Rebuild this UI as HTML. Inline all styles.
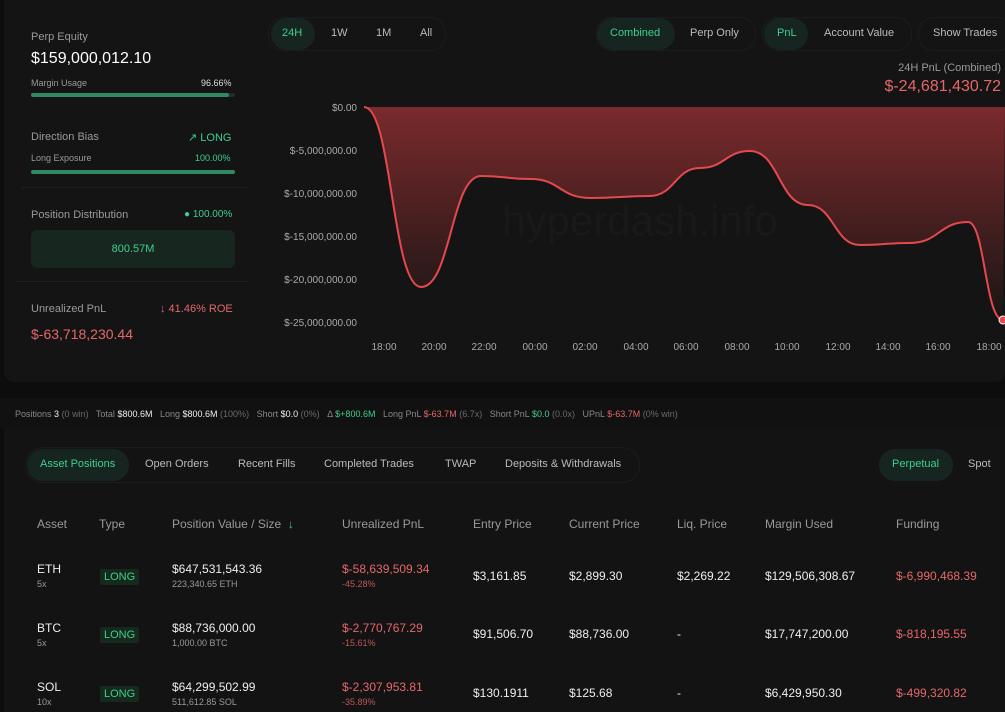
<!DOCTYPE html>
<html><head><meta charset="utf-8"><style>
*{box-sizing:border-box;margin:0;padding:0}
body{width:1005px;height:712px;overflow:hidden;background:#0d0d0d;font-family:"Liberation Sans",sans-serif;color:#e8e8e8;position:relative}
.abs{position:absolute;white-space:nowrap}
.g{color:#3ecf8e}.r{color:#e5676b}.m{color:#9a9a9a}.d{color:#6a6a6a}
.top{position:absolute;left:4px;top:0;width:1001px;height:382px;background:#141414;border-radius:0 0 10px 10px}
.bar{position:absolute;height:4px;border-radius:2px;background:#2a2a2a}
.bar i{display:block;height:4px;border-radius:2px;background:#2f8a63}
.pill{position:absolute;height:32px;border-radius:16px;background:#172520}
.grp{position:absolute;height:34px;border:1px solid #1c1c1c;border-radius:16px}
.bot{position:absolute;left:4px;top:428px;width:1001px;height:284px;background:#131313}
.tag{position:absolute;background:#15291d;color:#3ecf8e;font-size:11px;padding:2px 4px;border-radius:2px}
</style></head><body>
<div class="top"></div>
<div class="abs m" style="left:31px;top:31px;font-size:11px">Perp Equity</div>
<div class="abs" style="left:31px;top:50px;font-size:16px;color:#fff">$159,000,012.10</div>
<div class="abs m" style="left:31px;top:78px;font-size:9px">Margin Usage</div>
<div class="abs" style="left:201px;top:78px;font-size:9px;color:#ddd">96.66%</div>
<div class="bar" style="left:31px;top:93px;width:204px"><i style="width:198px"></i></div>
<div class="abs m" style="left:31px;top:131px;font-size:11px">Direction Bias</div>
<div class="abs g" style="left:188px;top:131px;font-size:11px">↗ LONG</div>
<div class="abs m" style="left:31px;top:153px;font-size:9px">Long Exposure</div>
<div class="abs g" style="left:195px;top:153px;font-size:9px">100.00%</div>
<div class="bar" style="left:31px;top:170px;width:204px;background:#2f8a63"></div>
<div class="abs" style="left:22px;top:187px;width:225px;height:1px;background:#1f1f1f"></div>
<div class="abs m" style="left:31px;top:209px;font-size:11px">Position Distribution</div>
<div class="abs g" style="left:184px;top:209px;font-size:10px">● 100.00%</div>
<div class="abs" style="left:31px;top:230px;width:204px;height:38px;background:#182620;border-radius:6px;color:#3ecf8e;font-size:11px;text-align:center;line-height:38px">800.57M</div>
<div class="abs" style="left:15px;top:281px;width:232px;height:1px;background:#1f1f1f"></div>
<div class="abs m" style="left:31px;top:303px;font-size:11px">Unrealized PnL</div>
<div class="abs r" style="left:160px;top:303px;font-size:11px">↓ 41.46% ROE</div>
<div class="abs r" style="left:31px;top:326px;font-size:14px">$-63,718,230.44</div>
<div class="grp" style="left:268px;top:17px;width:178px"></div>
<div class="pill" style="left:271px;top:18px;width:44px"></div>
<div class="abs g" style="left:282px;top:27px;font-size:11px">24H</div>
<div class="abs" style="left:331px;top:27px;font-size:11px;color:#bbb">1W</div>
<div class="abs" style="left:376px;top:27px;font-size:11px;color:#bbb">1M</div>
<div class="abs" style="left:420px;top:27px;font-size:11px;color:#bbb">All</div>
<div class="grp" style="left:596px;top:17px;width:160px"></div>
<div class="pill" style="left:597px;top:18px;width:78px"></div>
<div class="abs g" style="left:610px;top:27px;font-size:11px">Combined</div>
<div class="abs" style="left:690px;top:27px;font-size:11px;color:#bbb">Perp Only</div>
<div class="grp" style="left:762px;top:17px;width:150px"></div>
<div class="pill" style="left:764px;top:18px;width:44px"></div>
<div class="abs g" style="left:777px;top:27px;font-size:11px">PnL</div>
<div class="abs" style="left:824px;top:27px;font-size:11px;color:#bbb">Account Value</div>
<div class="grp" style="left:918px;top:17px;width:95px"></div>
<div class="abs" style="left:933px;top:27px;font-size:11px;color:#bbb">Show Trades</div>
<div class="abs m" style="right:4px;top:62px;font-size:11px">24H PnL (Combined)</div>
<div class="abs r" style="right:4px;top:78px;font-size:16px">$-24,681,430.72</div>
<svg class="abs" style="left:0;top:0" width="1005" height="382">
<defs><linearGradient id="f" x1="0" y1="107" x2="0" y2="320" gradientUnits="userSpaceOnUse"><stop offset="0" stop-color="#7a2a2c"/><stop offset="1" stop-color="#7a2a2c" stop-opacity="0.05"/></linearGradient></defs>
<text x="640" y="235" font-size="42" fill="#191919" text-anchor="middle" font-family="Liberation Sans">hyperdash.info</text>
<path d="M364,107 C392,107 392,287 421,287 C451,287 451,176 481,176 C506,176 506,179 531,179 C560,179 560,198 590,198 C620,198 620,196 649,196 C675,196 675,168 700,168 C725,168 725,151 750,151 C779,151 779,205 808,205 C834,205 834,245 860,245 C885,245 885,243 910,243 C939,243 939,222 968,222 C985,222 985,320 1003,320 L1005,107 Z" fill="url(#f)"/>
<path d="M364,107 C392,107 392,287 421,287 C451,287 451,176 481,176 C506,176 506,179 531,179 C560,179 560,198 590,198 C620,198 620,196 649,196 C675,196 675,168 700,168 C725,168 725,151 750,151 C779,151 779,205 808,205 C834,205 834,245 860,245 C885,245 885,243 910,243 C939,243 939,222 968,222 C985,222 985,320 1003,320" fill="none" stroke="#e5484d" stroke-width="2"/>
<circle cx="1003" cy="320" r="4" fill="#e5484d" stroke="#fff" stroke-width="1"/>
<g font-size="10" fill="#aaa" text-anchor="end" font-family="Liberation Sans">
<text x="357" y="111">$0.00</text><text x="357" y="154">$-5,000,000.00</text><text x="357" y="197">$-10,000,000.00</text><text x="357" y="240">$-15,000,000.00</text><text x="357" y="283">$-20,000,000.00</text><text x="357" y="326">$-25,000,000.00</text></g>
<g font-size="10" fill="#aaa" text-anchor="middle" font-family="Liberation Sans">
<text x="384" y="350">18:00</text><text x="434" y="350">20:00</text><text x="484" y="350">22:00</text><text x="535" y="350">00:00</text><text x="585" y="350">02:00</text><text x="636" y="350">04:00</text><text x="686" y="350">06:00</text><text x="737" y="350">08:00</text><text x="787" y="350">10:00</text><text x="838" y="350">12:00</text><text x="888" y="350">14:00</text><text x="938" y="350">16:00</text><text x="989" y="350">18:00</text></g>
</svg>
<div class="abs" style="left:0;top:398px;width:1005px;height:30px;background:#111"></div>
<div class="abs" style="left:15px;top:409px;font-size:9px;color:#888">Positions <b style="color:#eee;font-weight:normal">3</b> <span class="d">(0 win)</span>&nbsp;&nbsp; Total <span style="color:#eee">$800.6M</span>&nbsp;&nbsp; Long <span style="color:#eee">$800.6M</span> <span class="d">(100%)</span>&nbsp;&nbsp; Short <span style="color:#eee">$0.0</span> <span class="d">(0%)</span>&nbsp;&nbsp; Δ <span class="g">$+800.6M</span>&nbsp;&nbsp; Long PnL <span class="r">$-63.7M</span> <span class="d">(6.7x)</span>&nbsp;&nbsp; Short PnL <span class="g">$0.0</span> <span class="d">(0.0x)</span>&nbsp;&nbsp; UPnL <span class="r">$-63.7M</span> <span class="d">(0% win)</span></div>
<div class="bot"></div>
<div class="grp" style="left:25px;top:447px;width:615px;height:36px;border-radius:18px"></div>
<div class="pill" style="left:27px;top:449px;width:102px"></div>
<div class="abs g" style="left:40px;top:458px;font-size:11px">Asset Positions</div>
<div class="abs" style="left:145px;top:458px;font-size:11px;color:#bbb">Open Orders</div>
<div class="abs" style="left:238px;top:458px;font-size:11px;color:#bbb">Recent Fills</div>
<div class="abs" style="left:324px;top:458px;font-size:11px;color:#bbb">Completed Trades</div>
<div class="abs" style="left:445px;top:458px;font-size:11px;color:#bbb">TWAP</div>
<div class="abs" style="left:505px;top:458px;font-size:11px;color:#bbb">Deposits &amp; Withdrawals</div>
<div class="pill" style="left:879px;top:449px;width:74px"></div>
<div class="abs g" style="left:892px;top:458px;font-size:11px">Perpetual</div>
<div class="abs" style="left:968px;top:458px;font-size:11px;color:#bbb">Spot</div>
<div style="font-size:12px;color:#999">
<div class="abs" style="left:37px;top:517px">Asset</div><div class="abs" style="left:99px;top:517px">Type</div>
<div class="abs" style="left:172px;top:517px">Position Value / Size <span class="g">&nbsp;↓</span></div>
<div class="abs" style="left:342px;top:517px">Unrealized PnL</div><div class="abs" style="left:473px;top:517px">Entry Price</div>
<div class="abs" style="left:569px;top:517px">Current Price</div><div class="abs" style="left:677px;top:517px">Liq. Price</div>
<div class="abs" style="left:765px;top:517px">Margin Used</div><div class="abs" style="left:896px;top:517px">Funding</div>
</div>
<div style="font-size:12px;color:#eee">
<div class="abs" style="left:37px;top:562px">ETH</div><div class="abs m" style="left:37px;top:579px;font-size:9px">5x</div>
<div class="tag" style="left:100px;top:569px">LONG</div>
<div class="abs" style="left:172px;top:562px">$647,531,543.36</div><div class="abs m" style="left:172px;top:579px;font-size:9px">223,340.65 ETH</div>
<div class="abs r" style="left:342px;top:562px">$-58,639,509.34</div><div class="abs r" style="left:342px;top:579px;font-size:9px;opacity:.8">-45.28%</div>
<div class="abs" style="left:473px;top:569px">$3,161.85</div><div class="abs" style="left:569px;top:569px">$2,899.30</div><div class="abs" style="left:677px;top:569px">$2,269.22</div><div class="abs" style="left:765px;top:569px">$129,506,308.67</div><div class="abs r" style="left:896px;top:569px">$-6,990,468.39</div>
<div class="abs" style="left:37px;top:621px">BTC</div><div class="abs m" style="left:37px;top:638px;font-size:9px">5x</div>
<div class="tag" style="left:100px;top:627px">LONG</div>
<div class="abs" style="left:172px;top:621px">$88,736,000.00</div><div class="abs m" style="left:172px;top:638px;font-size:9px">1,000.00 BTC</div>
<div class="abs r" style="left:342px;top:621px">$-2,770,767.29</div><div class="abs r" style="left:342px;top:638px;font-size:9px;opacity:.8">-15.61%</div>
<div class="abs" style="left:473px;top:627px">$91,506.70</div><div class="abs" style="left:569px;top:627px">$88,736.00</div><div class="abs" style="left:677px;top:627px">-</div><div class="abs" style="left:765px;top:627px">$17,747,200.00</div><div class="abs r" style="left:896px;top:627px">$-818,195.55</div>
<div class="abs" style="left:37px;top:680px">SOL</div><div class="abs m" style="left:37px;top:697px;font-size:9px">10x</div>
<div class="tag" style="left:100px;top:686px">LONG</div>
<div class="abs" style="left:172px;top:680px">$64,299,502.99</div><div class="abs m" style="left:172px;top:697px;font-size:9px">511,612.85 SOL</div>
<div class="abs r" style="left:342px;top:680px">$-2,307,953.81</div><div class="abs r" style="left:342px;top:697px;font-size:9px;opacity:.8">-35.89%</div>
<div class="abs" style="left:473px;top:686px">$130.1911</div><div class="abs" style="left:569px;top:686px">$125.68</div><div class="abs" style="left:677px;top:686px">-</div><div class="abs" style="left:765px;top:686px">$6,429,950.30</div><div class="abs r" style="left:896px;top:686px">$-499,320.82</div>
</div>
</body></html>
